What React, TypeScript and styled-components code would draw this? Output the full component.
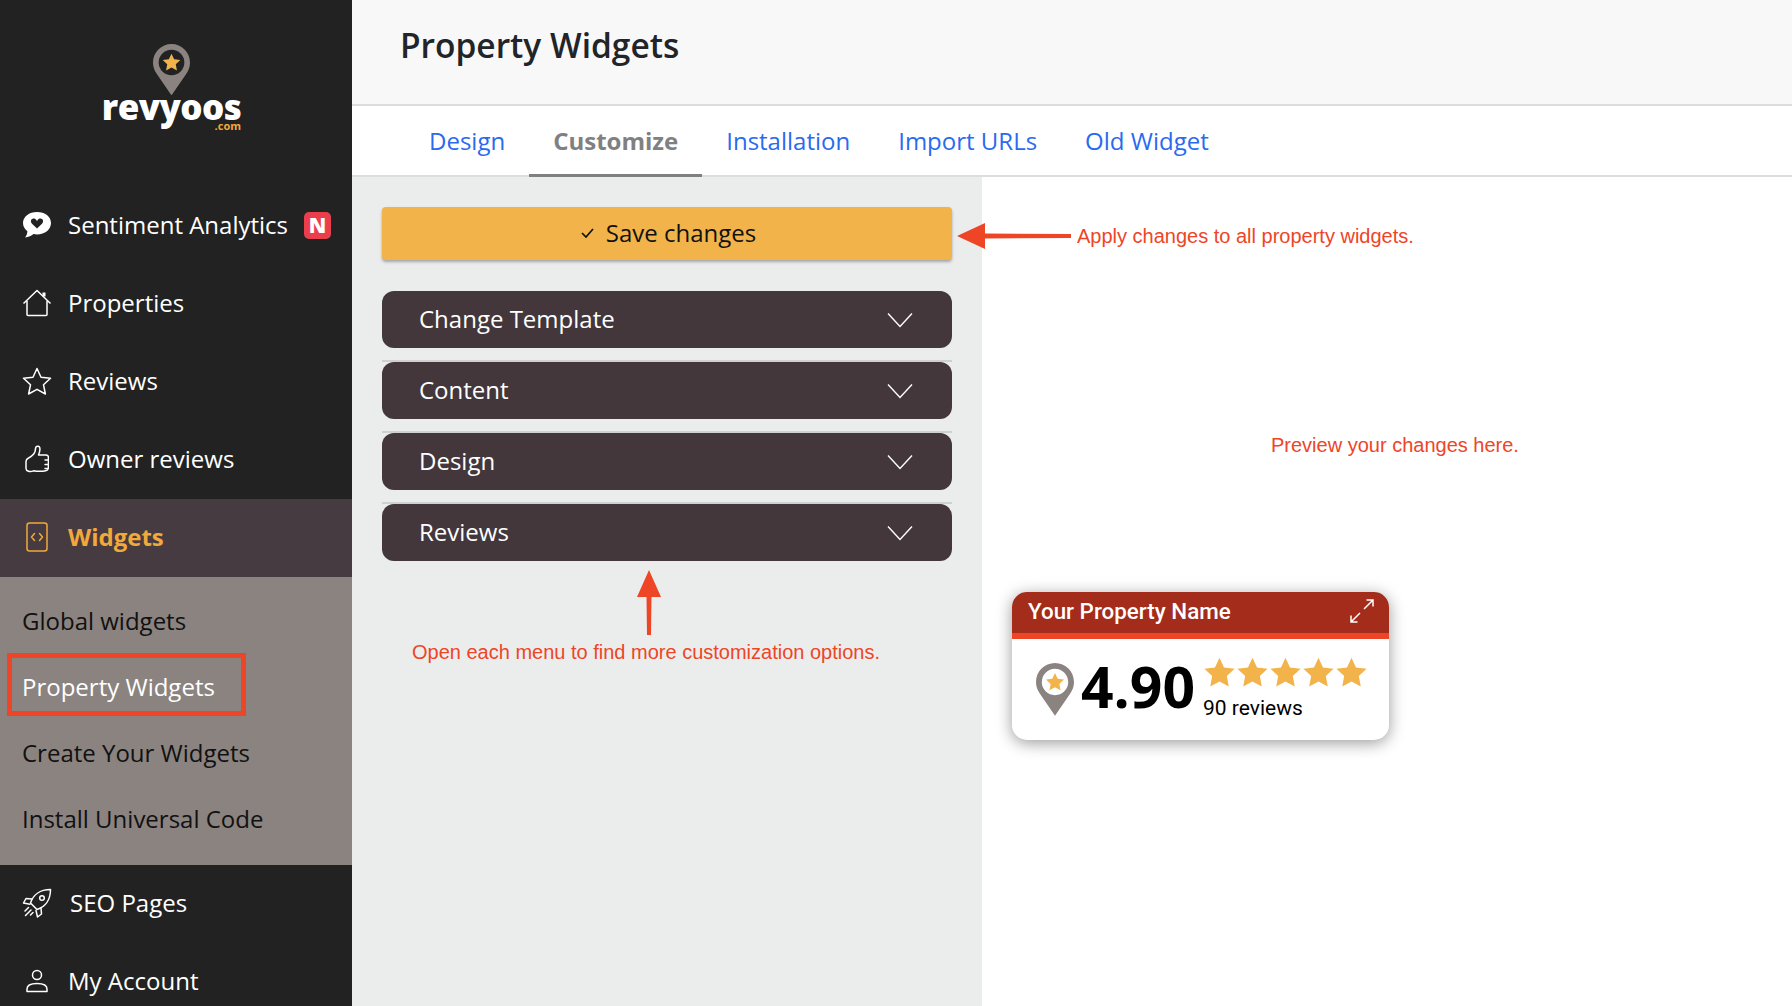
import { ReactNode } from "react";
import styled, { createGlobalStyle } from "styled-components";

const GlobalStyle = createGlobalStyle`
  html, body {
    margin: 0;
    padding: 0;
    height: 100%;
    overflow: hidden;
    background: #fff;
    font-family: "Open Sans", "Liberation Sans", sans-serif;
  }
  * { box-sizing: border-box; }
`;

const PIN_PATH =
  "M18 0C8 0 0 8 0 18c0 4 1.2 7.4 3.4 10.6L18 50l14.6-21.4C34.800 25.400 36 22 36 18 36 8 28 0 18 0z";
const STAR_PATH =
  "M12 1.500l3.200 6.900 7.500.9-5.500 5.200 1.400 7.500L12 18.400l-6.600 3.600 1.400-7.500-5.500-5.200 7.500-.9z";

function Pin({ hole, size }: { hole: string; size: number }) {
  return (
    <svg width={size} height={(size * 50) / 36} viewBox="0 0 36 50">
      <path d={PIN_PATH} fill="#8b8380" />
      <circle cx="18" cy="18" r="12.500" fill={hole} />
      <path transform="translate(8.400 8.200) scale(.8)" d={STAR_PATH} fill="#f2b44a" />
    </svg>
  );
}

const icons: Record<string, ReactNode> = {
  sentiment: (
    <svg width="30" height="28" viewBox="0 0 30 28">
      <path
        d="M15 1C7 1 1 5.800 1 12c0 3.300 1.700 6.200 4.400 8.200-.1 2.600-1 4.700-2.400 6.300 3.600-.2 6.500-1.500 8.500-3.400 1.100.2 2.300.3 3.500.3 8 0 14-4.900 14-11.400S23 1 15 1z"
        fill="#fff"
      />
      <path
        d="M15 17.500l-5-4.800c-1.500-1.500-1.400-3.600-.1-4.600 1.400-1 3.300-.6 4.200.7l.9 1.200.9-1.200c.9-1.300 2.800-1.700 4.200-.7 1.300 1 1.400 3.100-.1 4.600z"
        fill="#222"
      />
    </svg>
  ),
  home: (
    <svg width="30" height="28" viewBox="0 0 30 28" fill="none" stroke="#fff" strokeWidth="1.500">
      <path d="M1.500 14.500L15 1.500l13.500 13" strokeLinejoin="round" />
      <path d="M5 12v13.500c0 .6.400 1 1 1h18c.6 0 1-.4 1-1V12" />
      <path d="M22 3.500v4" strokeWidth="3" />
    </svg>
  ),
  star: (
    <svg width="30" height="28" viewBox="0 0 30 28" fill="none" stroke="#fff" strokeWidth="1.500" strokeLinejoin="round">
      <path d="M15 1.500l4 8.700 9.500 1.100-7 6.500 1.900 9.200-8.400-4.700-8.400 4.700 1.900-9.200-7-6.500 9.500-1.100z" />
    </svg>
  ),
  thumb: (
    <svg width="24" height="29" viewBox="0 0 24 29" fill="none" stroke="#fff" strokeWidth="1.500" strokeLinejoin="round" strokeLinecap="round">
      <path d="M1 16.500c0-1.800 1-2.800 2.500-3.500 3-1.500 5.500-3.500 6.500-6.500.5-1.800.2-3.500 1.200-4.800 1-1 3-.6 3.500.8.700 2.500-.3 5.500-1.200 7.500h7.500c1.600 0 2.500 1.100 2.400 2.500v10c0 1.600-.9 3-2.600 3.300-4 .7-8.800.7-12.300 0C5 27.500 1 26 1 23.500z" />
      <path d="M20 15h3M20 19.500h3M20 23.500h2.500" />
    </svg>
  ),
  widget: (
    <svg width="22" height="30" viewBox="0 0 22 30" fill="none" stroke="#f2a93b" strokeWidth="1.500" strokeLinecap="round" strokeLinejoin="round">
      <rect x="1" y="1" width="20" height="28" rx="2.500" />
      <path d="M8.500 11.500L5.500 15l3 3.500M13.500 11.500l3 3.500-3 3.500" />
    </svg>
  ),
  rocket: (
    <svg width="30" height="30" viewBox="0 0 30 30" fill="none" stroke="#fff" strokeWidth="1.500" strokeLinecap="round" strokeLinejoin="round">
      <path d="M8.500 15C11 7 18 1.500 28.500 1.500 28.500 12 23 19 15 21.500z" />
      <circle cx="20" cy="10" r="2.300" />
      <path d="M10 11L4 10.500 1.500 15l6.500 1.200M19 20l.5 6-4 3-1.500-6.500" />
      <path d="M6.500 19.500l-3.500 3.500M9 22l-5.500 5.500M11 24.500L8.500 27" />
    </svg>
  ),
  user: (
    <svg width="22" height="24" viewBox="0 0 22 24" fill="none" stroke="#fff" strokeWidth="1.500">
      <circle cx="11" cy="6" r="4.500" />
      <path d="M1 22.500v-2.500c0-3.300 3-5.500 10-5.500s10 2.200 10 5.500v2.500z" strokeLinejoin="round" />
    </svg>
  ),
};

const navTop = [
  { label: "Sentiment Analytics", icon: "sentiment", badge: true },
  { label: "Properties", icon: "home" },
  { label: "Reviews", icon: "star" },
  { label: "Owner reviews", icon: "thumb" },
];
const subItems = ["Global widgets", "Property Widgets", "Create Your Widgets", "Install Universal Code"];
const tabs = ["Design", "Customize", "Installation", "Import URLs", "Old Widget"];
const accordions = ["Change Template", "Content", "Design", "Reviews"];

export default function App() {
  return (
    <Page>
      <GlobalStyle />
      <Sidebar>
        <Logo>
          <Pin hole="#222" size={37} />
          <LogoWord>revyoos</LogoWord>
          <LogoCom>.com</LogoCom>
        </Logo>
        <Nav>
          {navTop.map((item) => (
            <NavRow key={item.label}>
              <NavIcon>{icons[item.icon]}</NavIcon>
              <NavLabel>{item.label}</NavLabel>
              {item.badge && <NewBadge>N</NewBadge>}
            </NavRow>
          ))}
          <NavRow $active>
            <NavIcon>{icons.widget}</NavIcon>
            <NavLabel>Widgets</NavLabel>
          </NavRow>
          <SubMenu>
            {subItems.map((label, i) => (
              <SubItem key={label} $current={i === 1}>
                {label}
              </SubItem>
            ))}
            <Highlight />
          </SubMenu>
          <NavRow>
            <NavIcon>{icons.rocket}</NavIcon>
            <NavLabel $nudge>SEO Pages</NavLabel>
          </NavRow>
          <NavRow>
            <NavIcon>{icons.user}</NavIcon>
            <NavLabel>My Account</NavLabel>
          </NavRow>
        </Nav>
      </Sidebar>
      <Main>
        <Header>
          <Title>Property Widgets</Title>
        </Header>
        <TabBar>
          {tabs.map((t) => (
            <Tab key={t} $active={t === "Customize"}>
              {t}
            </Tab>
          ))}
        </TabBar>
        <Workspace>
          <Controls>
            <SaveButton>
              <svg width="15" height="12" viewBox="0 0 15 12" fill="none" stroke="#111" strokeWidth="1.700">
                <path d="M2 6l4 4 7-8" />
              </svg>
              Save changes
            </SaveButton>
            <AccordionList>
              {accordions.map((a) => (
                <AccordionItem key={a}>
                  <span>{a}</span>
                  <svg width="26" height="16" viewBox="0 0 26 16" fill="none" stroke="#fff" strokeWidth="1.400">
                    <path d="M1 1.500l12 13 12-13" />
                  </svg>
                </AccordionItem>
              ))}
            </AccordionList>
            <UpArrow>
              <svg width="24" height="65" viewBox="0 0 24 65">
                <path d="M12 0l12 27h-9.500L14 65h-4l-.5-38H0z" fill="#ee4527" />
              </svg>
            </UpArrow>
            <ControlsNote>Open each menu to find more customization options.</ControlsNote>
          </Controls>
          <Preview>
            <ApplyRow>
              <svg width="114" height="26" viewBox="0 0 114 26">
                <path d="M0 13L28 0v10.500l86 .5v4l-86 .5V26z" fill="#ee4527" />
              </svg>
              <Note>Apply changes to all property widgets.</Note>
            </ApplyRow>
            <PreviewNote>Preview your changes here.</PreviewNote>
            <WidgetCard>
              <CardHead>
                <span>Your Property Name</span>
                <svg width="26" height="26" viewBox="0 0 26 26" fill="none" stroke="#fff" strokeWidth="1.500">
                  <path d="M15 11L24 2M17.500 2H24v6.500M11 15l-9 9M2 17.500V24h6.500" />
                </svg>
              </CardHead>
              <CardBody>
                <Pin hole="#fff" size={38} />
                <Score>4.90</Score>
                <ScoreSide>
                  <Stars>
                    {[0, 1, 2, 3, 4].map((i) => (
                      <svg key={i} width="33" height="31" viewBox="0.5 1 23 22">
                        <path d={STAR_PATH} fill="#f2b44a" />
                      </svg>
                    ))}
                  </Stars>
                  <ReviewCount>90 reviews</ReviewCount>
                </ScoreSide>
              </CardBody>
            </WidgetCard>
          </Preview>
        </Workspace>
      </Main>
    </Page>
  );
}

const Page = styled.div`
  display: flex;
  width: 1792px;
  height: 1006px;
  overflow: hidden;
`;

const Sidebar = styled.aside`
  width: 352px;
  flex: none;
  background: #222222;
  color: #fff;
`;

const Logo = styled.div`
  height: 187px;
  padding: 44px 9px 0 0;
  display: flex;
  flex-direction: column;
  align-items: center;
`;

const LogoWord = styled.div`
  font-size: 35px;
  font-weight: 800;
  line-height: 30px;
  margin-top: -3px;
  letter-spacing: -0.6px;
`;

const LogoCom = styled.div`
  font-size: 11px;
  font-weight: 700;
  line-height: 8px;
  color: #f2a93b;
  align-self: flex-end;
  margin-right: 102px;
`;

const Nav = styled.nav`
  display: flex;
  flex-direction: column;
`;

const NavRow = styled.div<{ $active?: boolean }>`
  height: 78px;
  flex: none;
  display: flex;
  align-items: center;
  gap: 16px;
  padding: 0 0 2px 22px;
  font-size: 24px;
  font-weight: ${(p) => (p.$active ? 700 : 400)};
  color: ${(p) => (p.$active ? "#f2a93b" : "#fff")};
  background: ${(p) => (p.$active ? "#463b40" : "transparent")};
`;

const NavLabel = styled.span<{ $nudge?: boolean }>`
  white-space: nowrap;
  padding-bottom: 2px;
  margin-left: ${(p) => (p.$nudge ? "2px" : "0")};
`;

const NavIcon = styled.span`
  width: 30px;
  flex: none;
  display: flex;
  justify-content: center;
  align-items: center;
`;

const NewBadge = styled.span`
  width: 27px;
  height: 27px;
  border-radius: 5px;
  background: #ea3e4d;
  color: #fff;
  font-size: 21px;
  font-weight: 800;
  display: flex;
  align-items: center;
  justify-content: center;
`;

const SubMenu = styled.div`
  position: relative;
  height: 288px;
  flex: none;
  padding-top: 11px;
  background: #8b8380;
`;

const SubItem = styled.div<{ $current?: boolean }>`
  height: 66px;
  display: flex;
  align-items: center;
  padding: 0 0 2px 22px;
  font-size: 24px;
  color: ${(p) => (p.$current ? "#fff" : "#111")};
`;

const Highlight = styled.div`
  position: absolute;
  left: 7px;
  top: 76px;
  width: 239px;
  height: 63px;
  border: 5px solid #ee4527;
`;

const Main = styled.main`
  flex: 1;
  min-width: 0;
  display: flex;
  flex-direction: column;
`;

const Header = styled.header`
  height: 106px;
  flex: none;
  padding: 22px 48px 0;
  background: #f8f8f8;
  border-bottom: 2px solid #dddddd;
`;

const Title = styled.h1`
  margin: 0;
  font-size: 33.500px;
  line-height: 46px;
  font-weight: 600;
  color: #212529;
`;

const TabBar = styled.div`
  height: 71px;
  flex: none;
  display: flex;
  padding-left: 53px;
  background: #fff;
  border-bottom: 2px solid #dddddd;
`;

const Tab = styled.div<{ $active?: boolean }>`
  height: 71px;
  padding: 0 24px;
  display: flex;
  align-items: center;
  font-size: 24px;
  font-weight: ${(p) => (p.$active ? 700 : 400)};
  color: ${(p) => (p.$active ? "#808080" : "#2a6af0")};
  border-bottom: 3px solid ${(p) => (p.$active ? "#808080" : "transparent")};
`;

const Workspace = styled.div`
  flex: 1;
  min-height: 0;
  display: flex;
`;

const Controls = styled.section`
  width: 630px;
  flex: none;
  padding: 30px 30px 0;
  background: #ebedec;
`;

const SaveButton = styled.button`
  width: 570px;
  height: 53px;
  padding: 0 0 2px 2px;
  display: flex;
  align-items: center;
  justify-content: center;
  gap: 11px;
  border: 0;
  border-radius: 4px;
  background: #f2b34a;
  color: #111;
  font: 400 24px "Open Sans", sans-serif;
  box-shadow: 0 2px 3px rgba(0, 0, 0, 0.3);
`;

const AccordionList = styled.div`
  margin-top: 31px;
  display: flex;
  flex-direction: column;
`;

const AccordionItem = styled.div`
  height: 57px;
  display: flex;
  align-items: center;
  justify-content: space-between;
  padding: 0 39px 0 37px;
  border-radius: 12px;
  background: #43373c;
  color: #fff;
  font-size: 24px;
  position: relative;
  & > span {
    padding-bottom: 2px;
  }
  & + & {
    margin-top: 14px;
  }
  & + &::before {
    content: "";
    position: absolute;
    left: 0;
    right: 0;
    top: -2px;
    height: 2px;
    background: #cfd1d0;
  }
`;

const UpArrow = styled.div`
  height: 65px;
  margin-top: 9px;
  padding-left: 255px;
  display: flex;
`;

const Note = styled.div`
  font: 400 20px "Liberation Sans", Arial, sans-serif;
  color: #ee4527;
  white-space: nowrap;
`;

const ControlsNote = styled(Note)`
  margin-top: 6px;
  padding-left: 30px;
`;

const Preview = styled.section`
  flex: 1;
  min-width: 0;
  background: #fff;
  display: flex;
  flex-direction: column;
  padding: 44px 0 0 30px;
`;

const ApplyRow = styled.div`
  position: relative;
  height: 30px;
  display: flex;
  align-items: center;
  padding-left: 65px;
  & > svg {
    position: absolute;
    left: -55px;
    top: 2px;
  }
`;

const PreviewNote = styled(Note)`
  margin: 183px 0 0 259px;
`;

const WidgetCard = styled.div`
  width: 377px;
  height: 148px;
  margin-top: 135px;
  border-radius: 15px;
  overflow: hidden;
  background: #fff;
  box-shadow: 0 3px 16px rgba(0, 0, 0, 0.4);
`;

const CardHead = styled.div`
  height: 47px;
  padding: 0 14px 3px 16px;
  display: flex;
  align-items: center;
  justify-content: space-between;
  background: #a42c1a;
  border-bottom: 6px solid #ee4527;
  color: #fff;
  font: 500 22.400px Roboto, sans-serif;
`;

const CardBody = styled.div`
  height: 101px;
  display: flex;
  align-items: center;
  padding-left: 24px;
`;

const Score = styled.div`
  margin: -7px 0 0 7px;
  font: 700 57px/60px "Open Sans", sans-serif;
  color: #000;
`;

const ScoreSide = styled.div`
  margin: -3px 0 0 8px;
  display: flex;
  flex-direction: column;
`;

const Stars = styled.div`
  display: flex;
`;

const ReviewCount = styled.div`
  font: 400 21px/24px Roboto, sans-serif;
  color: #000;
  margin-top: 8px;
`;
